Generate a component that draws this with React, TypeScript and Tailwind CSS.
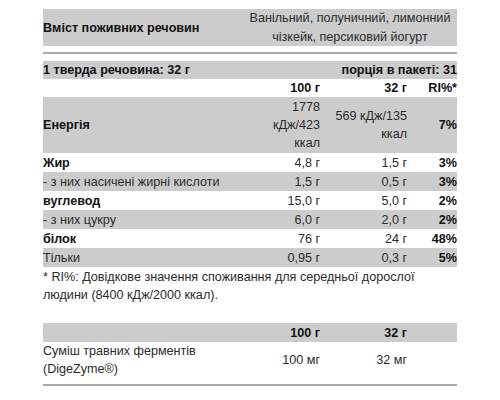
import React from 'react';

type Row = {
  label: string;
  per100: string;
  perServing: string;
  ri: string;
  bold?: boolean;
  shaded?: boolean;
};

const rows: Row[] = [
  { label: 'Жир', per100: '4,8 г', perServing: '1,5 г', ri: '3%', bold: true },
  { label: '- з них насичені жирні кислоти', per100: '1,5 г', perServing: '0,5 г', ri: '3%', shaded: true },
  { label: 'вуглевод', per100: '15,0 г', perServing: '5,0 г', ri: '2%', bold: true },
  { label: '- з них цукру', per100: '6,0 г', perServing: '2,0 г', ri: '2%', shaded: true },
  { label: 'білок', per100: '76 г', perServing: '24 г', ri: '48%', bold: true },
  { label: 'Тільки', per100: '0,95 г', perServing: '0,3 г', ri: '5%', shaded: true },
];

function Cols() {
  return (
    <colgroup>
      <col className="w-[200px]" />
      <col className="w-[77px]" />
      <col className="w-[87px]" />
      <col className="w-[50px]" />
    </colgroup>
  );
}

export default function App() {
  return (
    <main
      className="bg-white w-[500px] h-[400px] overflow-hidden px-[43px] pt-[9px] text-[12.6px] leading-[18px] text-[#2b2b2b]"
      style={{ fontFamily: '"Liberation Sans", Arial, sans-serif' }}
    >
      {/* Product header */}
      <div className="pb-[6px] border-b-2 border-[#ababab]">
        <table className="w-[414px] table-fixed border-collapse">
          <Cols />
          <tbody>
            <tr className="bg-[#cccccc] h-[37px]">
              <td className="p-0 align-middle font-bold text-[#111]">Вміст поживних речовин</td>
              <td colSpan={3} className="p-0 align-middle text-center leading-[18.5px]">
                Ванільний, полуничний, лимонний
                <br />
                чізкейк, персиковий йогурт
              </td>
            </tr>
          </tbody>
        </table>
      </div>

      {/* Nutrition values */}
      <table className="w-[414px] table-fixed border-collapse mt-[7px]">
        <Cols />
        <tbody>
          <tr className="bg-[#cccccc] h-[18px] font-bold text-[#111]">
            <td className="p-0">1 тверда речовина: 32 г</td>
            <td colSpan={3} className="p-0 text-right">порція в пакеті: 31</td>
          </tr>
          <tr className="h-[18px] font-bold text-[#111]">
            <td className="p-0"></td>
            <td className="p-0 text-right">100 г</td>
            <td className="p-0 text-right">32 г</td>
            <td className="p-0 text-right">RI%*</td>
          </tr>
          <tr className="bg-[#cccccc] h-[56px]">
            <td className="p-0 align-middle font-bold text-[#111]">Енергія</td>
            <td className="p-0 align-middle text-right">
              1778
              <br />
              кДж/423
              <br />
              ккал
            </td>
            <td className="p-0 align-middle text-right">
              569 кДж/135
              <br />
              ккал
            </td>
            <td className="p-0 align-middle text-right font-bold text-[#111]">7%</td>
          </tr>
          {rows.map((r) => (
            <tr key={r.label} className={r.shaded ? 'bg-[#cccccc] h-[19px]' : 'h-[19px]'}>
              <td className={r.bold ? 'p-0 font-bold text-[#111]' : 'p-0'}>{r.label}</td>
              <td className="p-0 text-right">{r.per100}</td>
              <td className="p-0 text-right">{r.perServing}</td>
              <td className="p-0 text-right font-bold text-[#111]">{r.ri}</td>
            </tr>
          ))}
        </tbody>
      </table>

      <p className="mt-[1px]">
        * RI%: Довідкове значення споживання для середньої дорослої
        <br />
        людини (8400 кДж/2000 ккал).
      </p>

      {/* Enzymes */}
      <div className="mt-[19px] pb-[6px] border-b-2 border-[#ababab]">
        <table className="w-[414px] table-fixed border-collapse">
          <Cols />
          <tbody>
            <tr className="bg-[#cccccc] h-[19px] font-bold text-[#111]">
              <td className="p-0"></td>
              <td className="p-0 text-right">100 г</td>
              <td className="p-0 text-right">32 г</td>
              <td className="p-0"></td>
            </tr>
            <tr className="h-[36px]">
              <td className="p-0 align-middle">
                Суміш травних ферментів
                <br />
                (DigeZyme®)
              </td>
              <td className="p-0 align-middle text-right">100 мг</td>
              <td className="p-0 align-middle text-right">32 мг</td>
              <td className="p-0"></td>
            </tr>
          </tbody>
        </table>
      </div>
    </main>
  );
}
